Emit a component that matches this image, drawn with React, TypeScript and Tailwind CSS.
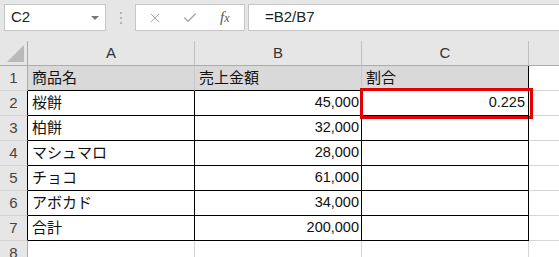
import { Check, X } from "lucide-react";

type Row = {
  num: number;
  name: string;
  sales: string;
  ratio?: string;
};

const rows: Row[] = [
  { num: 2, name: "桜餅", sales: "45,000", ratio: "0.225" },
  { num: 3, name: "柏餅", sales: "32,000" },
  { num: 4, name: "マシュマロ", sales: "28,000" },
  { num: 5, name: "チョコ", sales: "61,000" },
  { num: 6, name: "アボカド", sales: "34,000" },
  { num: 7, name: "合計", sales: "200,000" },
];

const font = "font-['Liberation_Sans','Noto_Sans_CJK_JP',sans-serif]";
const rowHead =
  "flex items-center justify-center border-r border-b border-r-[#ababab] border-b-[#d4d4d4] bg-[#e6e6e6] text-[15px] text-[#444]";

const App = () => {
  return (
    <div className={`h-[257px] w-[559px] overflow-hidden bg-white ${font}`}>
      {/* formula bar */}
      <div className="flex h-[41px] items-start bg-[#e6e6e6] pt-[4px]">
        <div className="ml-[4px] flex h-[27px] w-[102px] items-center justify-between border border-[#c6c6c6] bg-white pl-[6px] pr-[6px] text-[15px] text-[#222]">
          <span>C2</span>
          <span className="h-0 w-0 border-x-[4px] border-t-[4px] border-x-transparent border-t-[#777]" />
        </div>
        <div className="ml-[14px] flex h-[27px] flex-col items-center justify-center gap-[3px]">
          <span className="h-[2px] w-[2px] bg-[#b4b4b4]" />
          <span className="h-[2px] w-[2px] bg-[#b4b4b4]" />
          <span className="h-[2px] w-[2px] bg-[#b4b4b4]" />
        </div>
        <div className="ml-[13px] flex h-[27px] w-[110px] items-center border border-[#c6c6c6] bg-white">
          <X className="ml-[11px] h-[16px] w-[16px] text-[#aaa]" strokeWidth={1.5} />
          <Check className="ml-[19px] h-[16px] w-[16px] text-[#aaa]" strokeWidth={2.2} />
          <span className="ml-[22px] font-['Liberation_Serif',serif] text-[15px] italic text-[#555]">
            f<span className="text-[12px]">x</span>
          </span>
        </div>
        <div className="ml-[3px] flex h-[27px] flex-1 items-center border border-r-0 border-[#c6c6c6] bg-white pl-[16px] text-[15px] text-[#222]">
          =B2/B7
        </div>
      </div>

      {/* sheet */}
      <div className="grid grid-cols-[28px_167px_167px_167px_1fr] grid-rows-[25px_repeat(8,25px)]">
        {/* column headers */}
        <div className="relative border-r border-b border-[#ababab] bg-[#e6e6e6]">
          <svg className="absolute left-[7px] top-[4px]" width="17" height="17" viewBox="0 0 17 17">
            <polygon points="17,0 17,17 0,17" fill="#b9b9b9" />
          </svg>
        </div>
        {["A", "B", "C"].map((c) => (
          <div
            key={c}
            className="flex items-center justify-center border-r border-b border-r-[#c0c0c0] border-b-[#ababab] bg-[#e6e6e6] text-[15px] text-[#333]"
          >
            {c}
          </div>
        ))}
        <div className="border-b border-b-[#ababab] bg-[#e6e6e6]" />

        {/* row 1 */}
        <div className={rowHead}>1</div>
        <div className="flex items-center border-r border-b border-r-[#c8c8c8] border-b-black bg-[#d9d9d9] pl-[4px] text-[15px] text-[#111]">
          商品名
        </div>
        <div className="flex items-center border-r border-b border-r-[#c8c8c8] border-b-black bg-[#d9d9d9] pl-[4px] text-[15px] text-[#111]">
          売上金額
        </div>
        <div className="flex items-center border-r border-b border-black bg-[#d9d9d9] pl-[4px] text-[15px] text-[#111]">
          割合
        </div>
        <div className="border-b border-[#d4d4d4]" />

        {rows.map((r) => (
          <div key={r.num} className="contents">
            <div className={`${rowHead} !border-r-black`}>{r.num}</div>
            <div className="flex items-center border-r border-b border-black pl-[4px] text-[15px] text-[#111]">
              {r.name}
            </div>
            <div className="flex items-center justify-end border-r border-b border-black pr-[2px] text-[14.5px] text-[#111]">
              {r.sales}
            </div>
            <div className="relative flex items-center justify-end border-r border-b border-black pr-[3px] text-[14.5px] text-[#111]">
              {r.ratio}
              {r.ratio && (
                <div className="absolute -left-[2px] -top-[3px] h-[31px] w-[173px] border-[3px] border-[#e60000]" />
              )}
            </div>
            <div className="border-b border-[#d4d4d4]" />
          </div>
        ))}

        {/* row 8 */}
        <div className={rowHead}>8</div>
        <div className="border-r border-[#d4d4d4]" />
        <div className="border-r border-[#d4d4d4]" />
        <div className="border-r border-[#d4d4d4]" />
        <div />
      </div>
    </div>
  );
};

export default App;
